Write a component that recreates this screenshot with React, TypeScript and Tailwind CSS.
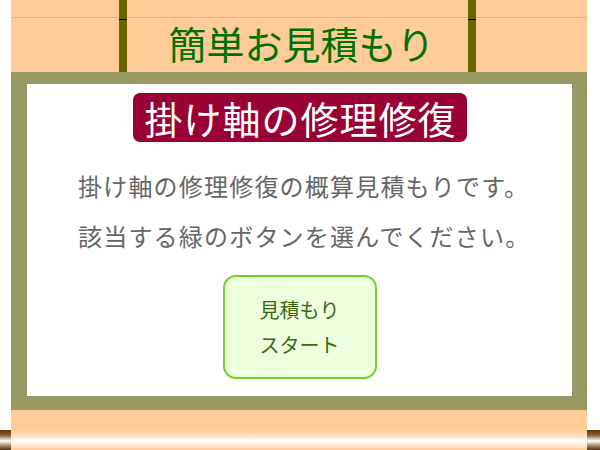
const jp = { fontFamily: '"Noto Sans CJK JP", "Noto Sans", sans-serif' }

// hanging cord of the scroll
function Cord() {
  return (
    <div className="relative w-[8px] h-full bg-[#666600]">
      <div className="absolute left-0 right-0 top-[19px] h-px bg-black" />
    </div>
  )
}

// wooden rod end sticking out past the scroll
function RodEnd() {
  return (
    <div className="h-[20px] w-full bg-[linear-gradient(to_bottom,#663300_0%,#8a5a30_25%,#ffffff_55%,#a08060_80%,#553311_100%)]" />
  )
}

export default function App() {
  return (
    <div className="w-[600px] h-[450px] bg-white flex overflow-hidden" style={jp}>
      <div className="w-[11px] flex flex-col justify-end">
        <RodEnd />
      </div>

      <div className="w-[576px] flex flex-col">
        <header className="relative h-[72px] bg-[#ffcc99] flex">
          <div className="absolute left-0 right-0 top-[17px] h-px bg-[#e6b386]" />
          <div className="w-[108px]" />
          <Cord />
          <div className="relative flex-1 flex items-center justify-center pt-[14px] pl-[8px]">
            <h1 className="text-[38px] leading-none text-[#007000]">簡単お見積もり</h1>
          </div>
          <Cord />
          <div className="w-[111px]" />
        </header>

        <div className="bg-[#999966] pl-[16px] pr-[15px] pt-[12px] pb-[14px]">
          <div className="h-[312px] bg-white flex flex-col items-center pt-[9px]">
            <div className="w-[334px] h-[49px] rounded-[7px] bg-[#990033] flex items-center justify-center pl-[2px]">
              <span className="text-[38px] leading-none text-white tracking-[1px]">掛け軸の修理修復</span>
            </div>

            <div className="self-stretch mt-[19px] pl-[51px] text-[24px] leading-[50px] text-[#666666] tracking-[1.2px]">
              <p>掛け軸の修理修復の概算見積もりです。</p>
              <p>該当する緑のボタンを選んでください。</p>
            </div>

            <button className="mt-[14px] w-[154px] h-[104px] rounded-[13px] border-2 border-[#7acc2a] bg-[#eeffdd] flex flex-col items-center justify-center text-[20px] leading-[35px] text-[#3a6a10]">
              <span>見積もり</span>
              <span>スタート</span>
            </button>
          </div>
        </div>

        <footer className="flex-1 bg-[#ffcc99] flex flex-col justify-end">
          <div className="h-[20px] bg-[linear-gradient(to_bottom,#ffcc99_0%,#ffe6cc_35%,#ffffff_55%,#ffe4c8_80%,#ffcc99_100%)]" />
        </footer>
      </div>

      <div className="flex-1 flex flex-col justify-end">
        <RodEnd />
      </div>
    </div>
  )
}
